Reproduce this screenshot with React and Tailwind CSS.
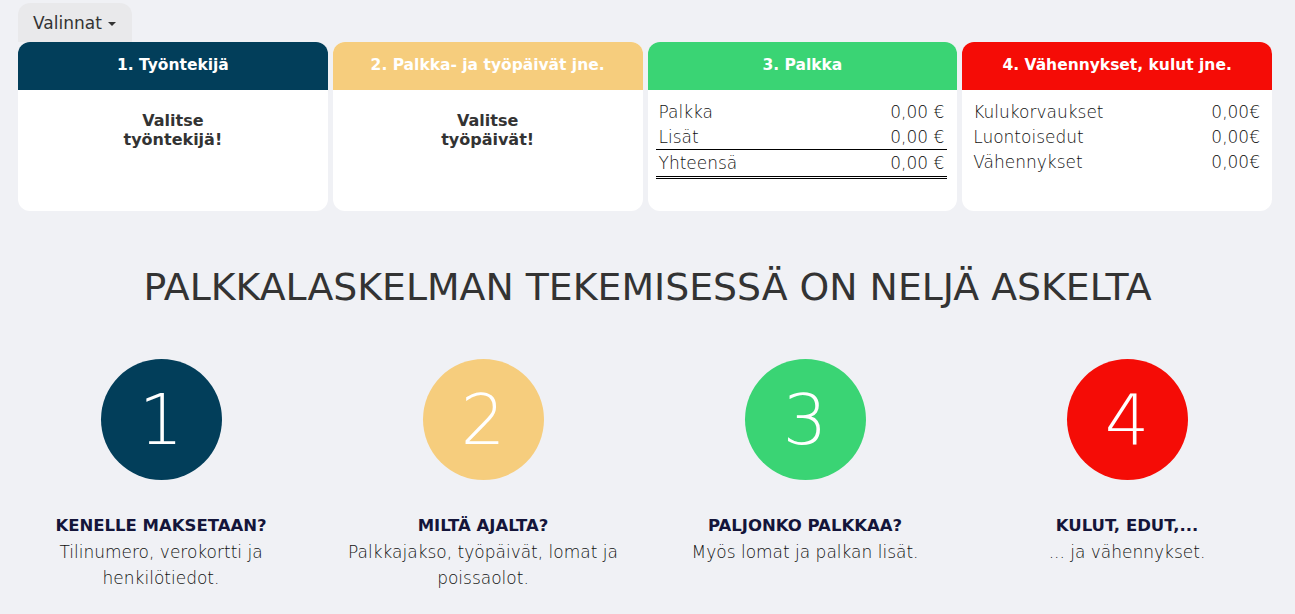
import React from "react";

const font = { fontFamily: '"DejaVu Sans", "Open Sans", sans-serif' };

const cards = [
  { title: "1. Työntekijä", bg: "bg-[#023e5a]", body: "pick", text: ["Valitse", "työntekijä!"] },
  { title: "2. Palkka- ja työpäivät jne.", bg: "bg-[#f6cd7d]", body: "pick", text: ["Valitse", "työpäivät!"] },
  { title: "3. Palkka", bg: "bg-[#3ad474]", body: "salary" },
  { title: "4. Vähennykset, kulut jne.", bg: "bg-[#f50c06]", body: "costs" },
];

const steps = [
  { n: "1", bg: "bg-[#023e5a]", title: "KENELLE MAKSETAAN?", lines: ["Tilinumero, verokortti ja", "henkilötiedot."] },
  { n: "2", bg: "bg-[#f6cd7d]", title: "MILTÄ AJALTA?", lines: ["Palkkajakso, työpäivät, lomat ja", "poissaolot."] },
  { n: "3", bg: "bg-[#3ad474]", title: "PALJONKO PALKKAA?", lines: ["Myös lomat ja palkan lisät."] },
  { n: "4", bg: "bg-[#f50c06]", title: "KULUT, EDUT,...", lines: ["... ja vähennykset."] },
];

function CardBody({ card }) {
  if (card.body === "pick") {
    return (
      <div className="pt-[21px] text-center text-[16px] font-semibold leading-[19px] text-[#333]">
        {card.text[0]}
        <br />
        {card.text[1]}
      </div>
    );
  }
  if (card.body === "salary") {
    return (
      <div className="pl-[8px] pr-[10px] pt-[10px] text-[17px] font-extralight text-[#111]">
        <div className="flex justify-between px-[3px] leading-[25px]">
          <span>Palkka</span>
          <span>0,00 €</span>
        </div>
        <div className="flex justify-between border-b border-black px-[3px] leading-[24px]">
          <span>Lisät</span>
          <span>0,00 €</span>
        </div>
        <div className="flex justify-between border-b-[3px] border-double border-black px-[3px] leading-[26px]">
          <span>Yhteensä</span>
          <span>0,00 €</span>
        </div>
      </div>
    );
  }
  return (
    <div className="pl-[11px] pr-[12px] pt-[10px] text-[17px] font-extralight leading-[25px] text-[#111]">
      {["Kulukorvaukset", "Luontoisedut", "Vähennykset"].map((l) => (
        <div key={l} className="flex justify-between">
          <span>{l}</span>
          <span>0,00€</span>
        </div>
      ))}
    </div>
  );
}

export default function App() {
  return (
    <div className="min-h-[614px] w-full bg-[#f0f1f5]" style={font}>
      <div className="px-[18px] pt-[3px]">
        <button className="flex h-[39px] items-center gap-[6px] rounded-t-[12px] bg-[#e9e9eb] pt-[2px] pl-[15px] pr-[16px] text-[17px] text-[#333]">
          Valinnat
          <span className="mt-[1px] h-0 w-0 border-x-[4px] border-t-[4px] border-x-transparent border-t-[#333]" />
        </button>
        <div className="grid w-[1254px] grid-cols-4 gap-[5px]">
          {cards.map((c) => (
            <div key={c.title} className="h-[169px] overflow-hidden rounded-[12px] bg-white">
              <div className={`flex h-[48px] items-center justify-center text-[15.5px] font-semibold text-white ${c.bg}`}>
                {c.title}
              </div>
              <CardBody card={c} />
            </div>
          ))}
        </div>
      </div>

      <h1 className="mt-[54px] text-center text-[37.8px] font-medium leading-[44px] text-[#333]">
        PALKKALASKELMAN TEKEMISESSÄ ON NELJÄ ASKELTA
      </h1>

      <div className="mt-[50px] grid w-[1288px] grid-cols-4">
        {steps.map((s) => (
          <div key={s.n} className="flex flex-col items-center text-center">
            <div className={`flex h-[121px] w-[121px] items-center justify-center rounded-full ${s.bg}`}>
              <span className="text-[70px] font-extralight leading-none text-white">{s.n}</span>
            </div>
            <div className="mt-[36px] text-[16.5px] font-bold leading-[20px] text-[#14153a]">{s.title}</div>
            <div className="mt-[3px] text-[17px] font-extralight leading-[26px] text-[#111]">
              {s.lines.map((l) => (
                <div key={l}>{l}</div>
              ))}
            </div>
          </div>
        ))}
      </div>
    </div>
  );
}
